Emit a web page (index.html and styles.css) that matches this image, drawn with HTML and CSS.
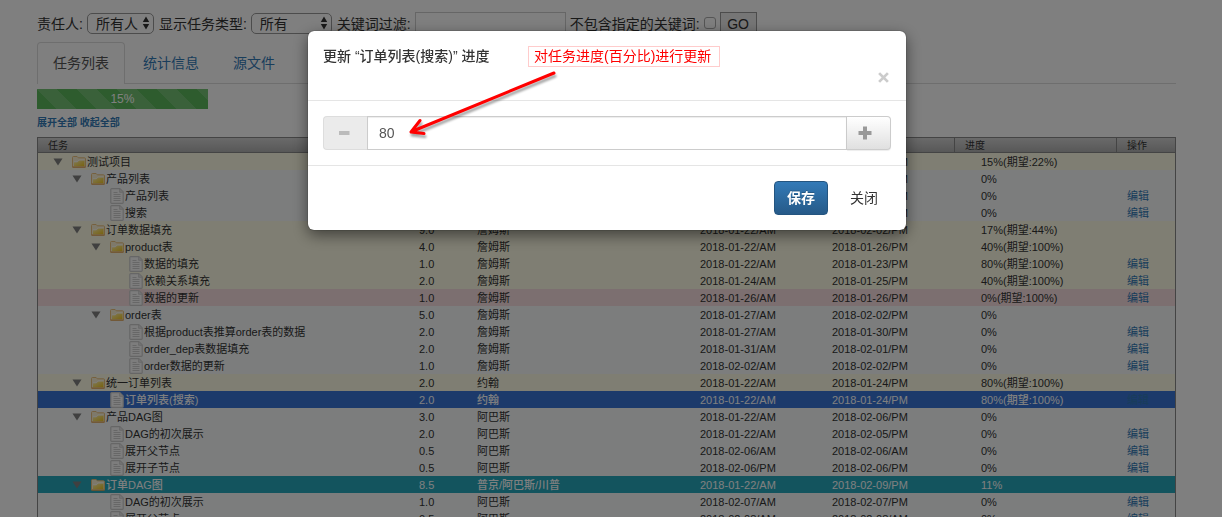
FILE: index.html
```html
<!DOCTYPE html>
<html lang="zh-CN">
<head>
<meta charset="utf-8">
<title>任务列表</title>
<link rel="stylesheet" href="styles.css">
</head>
<body>
<svg class="defs" aria-hidden="true">
  <defs>
    <linearGradient id="fold" x1="0" y1="0" x2="1" y2="1"><stop offset="0" stop-color="#fff3b0"/><stop offset="1" stop-color="#f2c61c"/></linearGradient>
    <symbol id="folder" viewBox="0 0 14 12">
      <path d="M.5 11V1.500a1 1 0 0 1 1-1h3.600l1.200 1.300h6.200a1 1 0 0 1 1 1V11z" fill="#fdf3d4" stroke="#ecc07c"/>
      <path d="M2 10.300V6h3.500L7 4.300h5.500v6z" fill="url(#fold)"/>
      <path d="M2 5.800h3.400L7 4h5.500" fill="none" stroke="#fff" stroke-width=".8"/>
      <path d="M.5 11.200h13" stroke="#e0a050" stroke-width="1"/>
    </symbol>
    <symbol id="doc" viewBox="0 0 14 16">
      <path d="M.8 1.500a.8.8 0 0 1 .8-.8h8.200l3.400 3.400v10.400a.8.8 0 0 1-.8.800H1.600a.8.8 0 0 1-.8-.8z" fill="#fafafa" stroke="#cdcdcd" stroke-width="1.200"/>
      <path d="M9.600.8v3.500h3.500" fill="#e8e8e8" stroke="#cdcdcd" stroke-width=".8"/>
      <path d="M3.500 4.500h4M3.500 6.500h7M3.500 8.500h7M3.500 10.500h7M3.500 12.500h7" stroke="#c8c8c8" stroke-width=".9"/>
    </symbol>
    <symbol id="caret" viewBox="0 0 10 8"><path d="M.5.5h9L5 7.500z" fill="#808080"/></symbol>
    <symbol id="updown" viewBox="0 0 8 14"><path d="M4 .5 7.200 6H.8zM4 13.500.8 8h6.400z" fill="#333"/></symbol>
  </defs>
</svg>

<main class="page">
  <form class="filters">
    <label for="owner">责任人:</label>
    <span class="pick pick-owner"><select id="owner"><option>所有人</option></select><svg><use href="#updown"/></svg></span>
    <label for="kind">显示任务类型:</label>
    <span class="pick pick-kind"><select id="kind"><option>所有</option></select><svg><use href="#updown"/></svg></span>
    <label for="keyword">关键词过滤:</label>
    <input class="keyword" id="keyword" type="text">
    <label for="exclude">不包含指定的关键词:</label>
    <input class="exclude" id="exclude" type="checkbox">
    <button class="go" type="button">GO</button>
  </form>

  <nav class="tabs">
    <a class="tab active" href="#list">任务列表</a>
    <a class="tab" href="#stats">统计信息</a>
    <a class="tab" href="#source">源文件</a>
  </nav>

  <div class="progress"><div class="bar" style="width:15%">15%</div></div>

  <div class="toggles"><a href="#expand">展开全部</a> <a href="#collapse">收起全部</a></div>

  <table class="tree">
    <colgroup><col class="c-task"><col class="c-days"><col class="c-owner"><col class="c-start"><col class="c-end"><col class="c-done"><col class="c-edit"></colgroup>
    <thead><tr><th>任务</th><th>工作量</th><th>责任人</th><th>开始时间</th><th>结束时间</th><th>进度</th><th>操作</th></tr></thead>
    <tbody id="rows"></tbody>
  </table>
</main>

<div class="backdrop"></div>

<div class="modal-layer">
  <section class="modal" role="dialog" aria-labelledby="modal-title">
    <header class="modal-head">
      <h3 id="modal-title">更新 “订单列表(搜索)” 进度</h3>
      <button class="close" type="button" aria-label="关闭窗口"><svg viewBox="0 0 10 10"><path d="M1 1l8 8M9 1L1 9"/></svg></button>
    </header>
    <div class="modal-body">
      <div class="spinner">
        <button class="step" type="button" disabled aria-label="减少"><svg viewBox="0 0 14 14"><path d="M2 7h10.500"/></svg></button>
        <input type="text" value="80" aria-label="进度">
        <button class="step" type="button" aria-label="增加"><svg viewBox="0 0 14 14"><path d="M.5 7h13M7 .5v13"/></svg></button>
      </div>
    </div>
    <footer class="modal-foot">
      <button class="save" type="button">保存</button>
      <button class="dismiss" type="button">关闭</button>
    </footer>
    <p class="note">对任务进度(百分比)进行更新</p>
    <svg class="arrow" viewBox="0 0 160 76"><path d="M149 8 8 66M15 55.500 6 67l13 1.500"/></svg>
  </section>
</div>
<script src="rows.js"></script>
</body>
</html>
```
FILE: styles.css
```css
* { box-sizing: border-box; }

body {
  margin: 0;
  height: 100vh;
  overflow: hidden;
  background: #fff;
  color: #333;
  font: 14px/20px "Liberation Sans", "Noto Sans CJK SC", sans-serif;
}

a { color: #337ab7; text-decoration: none; }
button, input, select { font: inherit; color: inherit; margin: 0; }
.defs { position: absolute; width: 0; height: 0; }

.page { padding: 12px 46px 0 37px; }

/* filters */
.filters { display: flex; align-items: center; gap: 4px; height: 22px; white-space: nowrap; }
.filters label { padding-top: 2px; }
.pick { display: grid; margin-right: 1px; }
.pick > * { grid-area: 1 / 1; }
.pick select {
  appearance: none;
  height: 21px;
  padding: 1px 8px 0;
  line-height: 18px;
  border: 1px solid #999;
  border-radius: 5px;
  background: #fff;
}
.pick svg { width: 8px; height: 14px; margin-right: 4px; place-self: center end; pointer-events: none; }
.pick-owner { width: 67px; }
.pick-kind { width: 81px; }
.keyword { width: 151px; height: 22px; border: 1px solid #ccc; background: #fff; }
.exclude { appearance: none; width: 12px; height: 12px; border: 1px solid #aaa; border-radius: 3px; }
.go { width: 37px; height: 22px; padding: 2px 0 0; border: 1px solid #999; background: #ececec; line-height: 18px; }

/* tabs */
.tabs { display: flex; gap: 2px; margin-top: 8px; border-bottom: 1px solid #ddd; }
.tab { padding: 10px 15px; border: 1px solid transparent; border-bottom: 0; margin-bottom: -1px; }
.tab.active { padding-bottom: 11px; color: #555; background: #fff; border-color: #ddd; border-radius: 4px 4px 0 0; }

/* overall progress */
.progress { margin-top: 5px; height: 20px; }
.bar {
  height: 20px;
  color: #fff;
  font-size: 12px;
  text-align: center;
  background: linear-gradient(45deg, rgba(255,255,255,.15) 25%, transparent 25%, transparent 50%, rgba(255,255,255,.15) 50%, rgba(255,255,255,.15) 75%, transparent 75%) 0 0 / 40px 40px #5cb85c;
}

.toggles { margin-top: 4px; padding-top: 1px; font-size: 10px; font-weight: 700; line-height: 18px; }

/* task tree */
.tree {
  width: 100%;
  margin-top: 5px;
  table-layout: fixed;
  border-collapse: separate;
  border-spacing: 0;
  border: 1px solid #888;
  font-size: 11px;
  line-height: 16px;
  white-space: nowrap;
}
.c-days { width: 58px; }
.c-owner { width: 223px; }
.c-start { width: 132px; }
.c-end { width: 149px; }
.c-done { width: 162px; }
.c-edit { width: 58px; }
.tree th {
  height: 15px;
  padding: 2px 10px 0;
  overflow: hidden;
  font-size: 10px;
  font-weight: 400;
  line-height: 12px;
  text-align: left;
  background: linear-gradient(#d4d4d4, #b0b0b0);
  border-right: 1px solid #888;
  border-bottom: 1px solid #888;
}
.tree th:last-child { border-right: 0; }
.tree td { height: 17px; padding: 1px 0 0 26px; }
.tree td:first-child { padding: 0 0 0 14px; }
.tree td:last-child { padding-left: 10px; }
.node { display: flex; align-items: center; height: 17px; }
.node .name { padding: 1px 0 0 1px; }
.indent { width: 19px; }
.twist { width: 20px; height: 8px; padding: 0; border: 0; background: none; display: flex; }
.twist svg { width: 12px; height: 8px; }
.icon-folder { width: 14px; height: 12px; }
.icon-doc { width: 14px; height: 16px; }
.even { background: #f8fbfb; }
.late { background: #fffde6; }
.danger { background: #f8dfe0; }
.picked { background: #3875d7; color: #fff; }
.doing { background: #27a9bd; color: #fff; }
.picked, .doing { font-weight: 500; }

/* dialog */
.backdrop { position: fixed; inset: 0; background: rgba(0, 0, 0, .5); }
.modal-layer { position: fixed; inset: 0; display: flex; justify-content: center; align-items: flex-start; padding: 31px 8px 0 0; }
.modal {
  position: relative;
  width: 598px;
  max-width: 100%;
  background: #fff;
  border-radius: 6px;
  box-shadow: 0 5px 15px rgba(0, 0, 0, .5), 0 0 1px #000;
}
.modal-head { display: flex; flex-direction: column; padding: 15px 15px 17px; border-bottom: 1px solid #e5e5e5; }
.modal h3 { margin: 0; font-size: 14px; font-weight: 500; line-height: 20px; }
.close { align-self: flex-end; width: 14px; height: 17px; padding: 0 0 0 1px; border: 0; background: none; }
.close svg { display: block; width: 11px; height: 11px; margin-top: 5px; fill: none; stroke: #ccc; stroke-width: 2.500; }
.modal-body { padding: 15px; }
.spinner { display: flex; height: 34px; }
.spinner input {
  flex: 1;
  min-width: 0;
  padding: 6px 11px;
  border: 1px solid #ccc;
  color: #555;
  box-shadow: inset 0 1px 1px rgba(0, 0, 0, .075);
}
.step {
  width: 44px;
  padding: 0 8px 0 0;
  border: 1px solid #ccc;
  background: linear-gradient(#fff, #e0e0e0);
  box-shadow: 0 1px 1px rgba(0, 0, 0, .075);
}
.step svg { display: block; width: 14px; height: 14px; margin: auto; stroke: #999; stroke-width: 4; }
.step:first-child { border-radius: 4px 0 0 4px; border-color: #ddd; border-right: 0; padding: 0 4px 0 0; background: #ebebeb; box-shadow: none; }
.step:first-child svg { stroke: #bbb; }
.step:last-child { border-radius: 0 4px 4px 0; border-left: 0; }
.modal-foot { display: flex; justify-content: flex-end; gap: 8px; padding: 15px; border-top: 1px solid #e5e5e5; }
.save {
  height: 34px;
  padding: 0 12px;
  border: 1px solid #245580;
  border-radius: 4px;
  color: #fff;
  font-weight: 700;
  background: linear-gradient(#337ab7, #265a88);
  text-shadow: 0 -1px 0 rgba(0, 0, 0, .2);
}
.dismiss { height: 34px; padding: 0 13px 0 14px; border: 0; background: none; }

.note {
  position: absolute;
  left: 220px;
  top: 15px;
  margin: 0;
  padding: 0 8px 0 5px;
  border: 1px solid #fcc;
  color: #f00;
  line-height: 19px;
  white-space: nowrap;
}
.arrow {
  position: absolute;
  left: 97px;
  top: 34px;
  width: 160px;
  height: 76px;
  fill: none;
  stroke: #f00;
  stroke-width: 3;
  stroke-linecap: round;
  stroke-linejoin: round;
  filter: drop-shadow(1px 3px 1px rgba(0, 0, 0, .35));
}
```
FILE: rows.js
```js
// level, name, days, owner, start, end, progress, row class, folder
const rows = [
  [0, '测试项目', '22.5', '詹姆斯', '2018-01-22/AM', '2018-02-09/PM', '15%(期望:22%)', 'late', 1],
  [1, '产品列表', '2.0', '约翰', '2018-01-25/AM', '2018-01-26/PM', '0%', 'even', 1],
  [2, '产品列表', '1.0', '约翰', '2018-01-25/AM', '2018-01-25/PM', '0%', 'even', 0],
  [2, '搜索', '1.0', '约翰', '2018-01-26/AM', '2018-01-26/PM', '0%', 'even', 0],
  [1, '订单数据填充', '9.0', '詹姆斯', '2018-01-22/AM', '2018-02-02/PM', '17%(期望:44%)', 'late', 1],
  [2, 'product表', '4.0', '詹姆斯', '2018-01-22/AM', '2018-01-26/PM', '40%(期望:100%)', 'late', 1],
  [3, '数据的填充', '1.0', '詹姆斯', '2018-01-22/AM', '2018-01-23/PM', '80%(期望:100%)', 'late', 0],
  [3, '依赖关系填充', '2.0', '詹姆斯', '2018-01-24/AM', '2018-01-25/PM', '40%(期望:100%)', 'late', 0],
  [3, '数据的更新', '1.0', '詹姆斯', '2018-01-26/AM', '2018-01-26/PM', '0%(期望:100%)', 'danger', 0],
  [2, 'order表', '5.0', '詹姆斯', '2018-01-27/AM', '2018-02-02/PM', '0%', 'even', 1],
  [3, '根据product表推算order表的数据', '2.0', '詹姆斯', '2018-01-27/AM', '2018-01-30/PM', '0%', 'even', 0],
  [3, 'order_dep表数据填充', '2.0', '詹姆斯', '2018-01-31/AM', '2018-02-01/PM', '0%', 'even', 0],
  [3, 'order数据的更新', '1.0', '詹姆斯', '2018-02-02/AM', '2018-02-02/PM', '0%', 'even', 0],
  [1, '统一订单列表', '2.0', '约翰', '2018-01-22/AM', '2018-01-24/PM', '80%(期望:100%)', 'late', 1],
  [2, '订单列表(搜索)', '2.0', '约翰', '2018-01-22/AM', '2018-01-24/PM', '80%(期望:100%)', 'picked', 0],
  [1, '产品DAG图', '3.0', '阿巴斯', '2018-01-22/AM', '2018-02-06/PM', '0%', 'even', 1],
  [2, 'DAG的初次展示', '2.0', '阿巴斯', '2018-01-22/AM', '2018-02-05/PM', '0%', 'even', 0],
  [2, '展开父节点', '0.5', '阿巴斯', '2018-02-06/AM', '2018-02-06/AM', '0%', 'even', 0],
  [2, '展开子节点', '0.5', '阿巴斯', '2018-02-06/PM', '2018-02-06/PM', '0%', 'even', 0],
  [1, '订单DAG图', '8.5', '普京/阿巴斯/川普', '2018-01-22/AM', '2018-02-09/PM', '11%', 'doing', 1],
  [2, 'DAG的初次展示', '1.0', '阿巴斯', '2018-02-07/AM', '2018-02-07/PM', '0%', 'even', 0],
  [2, '展开父节点', '0.5', '阿巴斯', '2018-02-08/AM', '2018-02-08/AM', '0%', 'even', 0]
];

document.getElementById('rows').innerHTML = rows.map(([level, name, days, owner, start, end, done, cls, folder]) => {
  const indent = '<span class="indent"></span>'.repeat(level);
  const twist = folder
    ? '<button class="twist" type="button" aria-label="收起"><svg><use href="#caret"/></svg></button>'
    : '<span class="twist"></span>';
  const icon = folder
    ? '<svg class="icon-folder"><use href="#folder"/></svg>'
    : '<svg class="icon-doc"><use href="#doc"/></svg>';
  const edit = folder ? '' : '<a href="#edit">编辑</a>';
  return `<tr class="${cls}"><td><div class="node">${indent}${twist}${icon}<span class="name">${name}</span></div></td>` +
    [days, owner, start, end, done, edit].map(v => `<td>${v}</td>`).join('') + '</tr>';
}).join('');
```
